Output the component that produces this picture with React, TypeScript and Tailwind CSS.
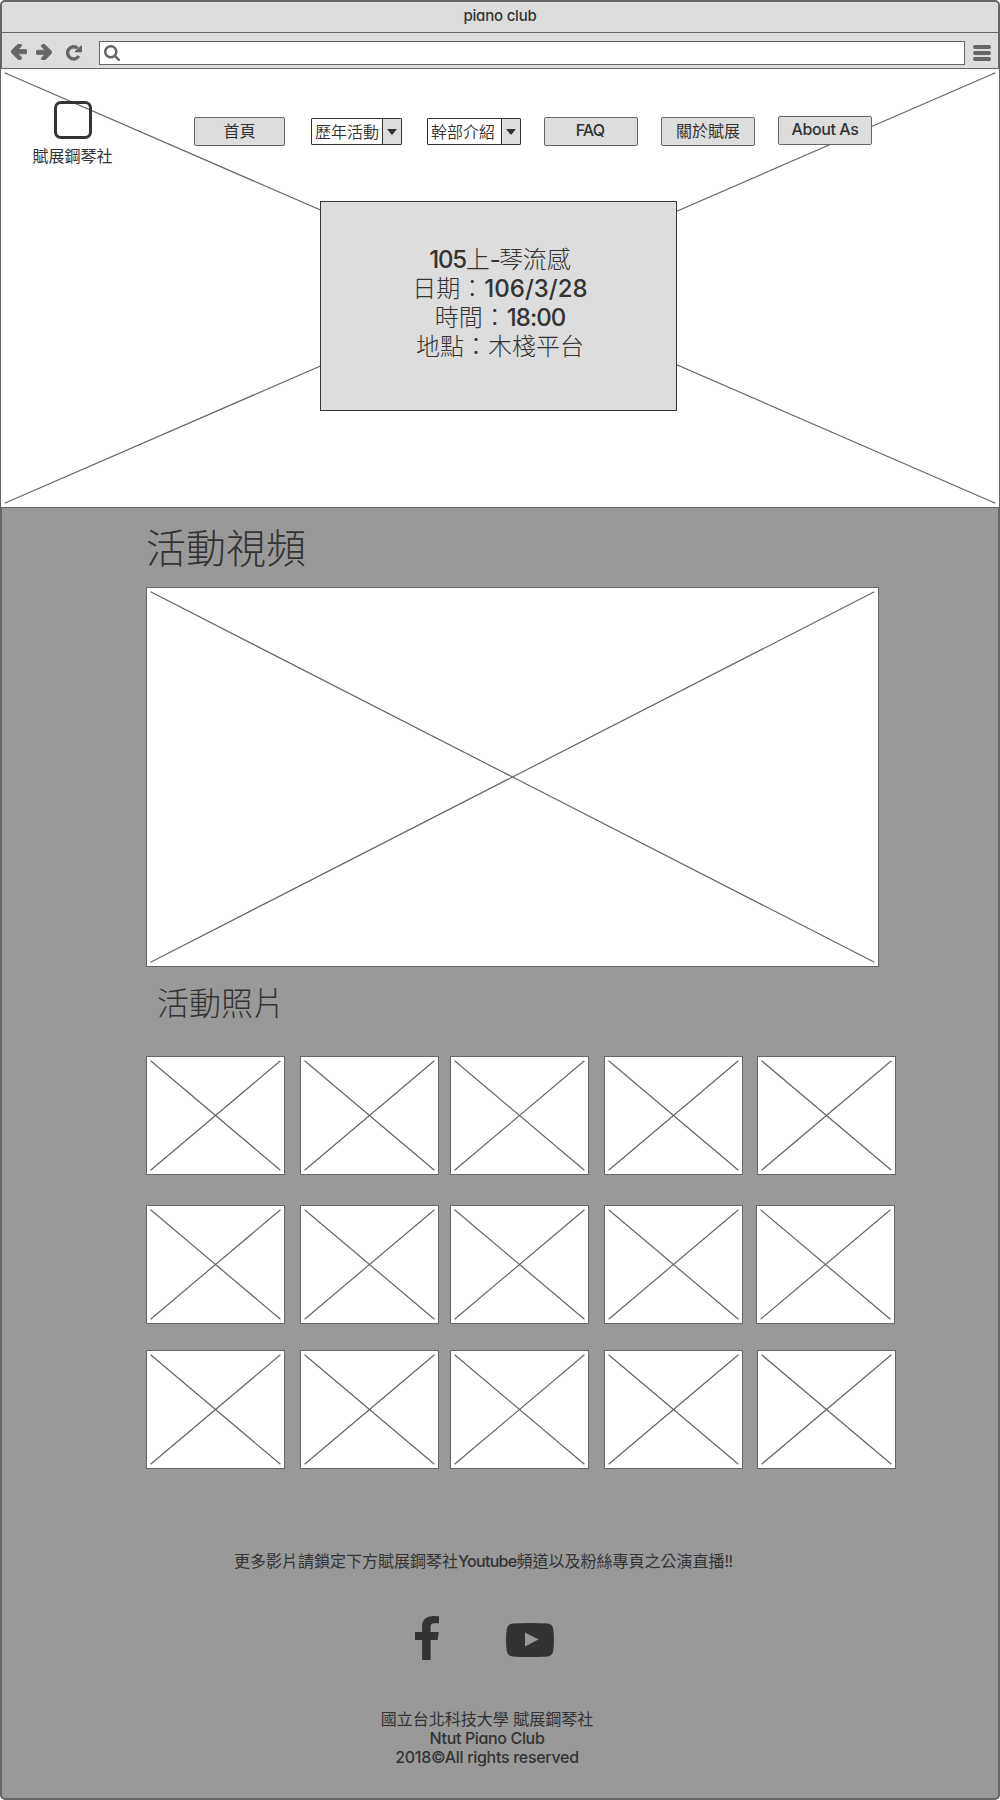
import React from "react";

const LATIN = "font-['Inter','Noto_Sans_CJK_TC',sans-serif] [font-feature-settings:'cv11']";

function Crossed({ width, height, className = "" }: { width: number; height: number; className?: string }) {
  return (
    <div className={`shrink-0 border border-[#666] bg-white ${className}`} style={{ width, height }}>
      <svg className="-m-px block" width={width} height={height} fill="none" stroke="#666" strokeWidth="1.2">
        <path d={`M4.6 4.8L${width - 4.6} ${height - 4.8}M4.6 ${height - 4.8}L${width - 4.6} 4.8`} />
      </svg>
    </div>
  );
}

function ArrowLeft({ className = "" }: { className?: string }) {
  return (
    <svg className={`h-4 w-4 ${className}`} viewBox="64 188 1472 1472" fill="#666" stroke="#666" strokeWidth="70">
      <path d="M1536 832v128q0 53-32.5 90.5t-84.5 37.5h-704l293 294q38 36 38 90t-38 90l-75 76q-37 37-90 37-52 0-91-37l-651-652q-37-37-37-90 0-52 37-91l651-650q38-38 91-38 52 0 90 38l75 74q38 38 38 91t-38 91l-293 293h704q52 0 84.5 37.5t32.5 90.5z" />
    </svg>
  );
}

function Toolbar() {
  return (
    <div className="flex h-[35px] items-start bg-[#ddd] pl-[9px]">
      <ArrowLeft className="mt-[11px]" />
      <ArrowLeft className="mt-[11px] ml-[9px] rotate-180" />
      <svg className="mt-3 ml-[14px] h-4 w-4" viewBox="0 0 16 16" fill="none">
        <path d="M12.9 11A6.1 6.1 0 1 1 11.6 3.2" stroke="#666" strokeWidth="3.4" />
        <path d="M16 .8V6.6Q16 7.2 15.4 7.2H9.4Q8.3 7 9 6.2L15 .5Q15.8 0 16 .8Z" fill="#666" />
      </svg>
      <div className="mt-2 ml-[17px] h-6 w-[866px] border border-[#666] bg-white pt-[3px] pl-1">
        <svg className="h-4 w-4" viewBox="64 128 1664 1664" fill="#666">
          <path d="M1216 832q0-185-131.5-316.5t-316.5-131.5-316.5 131.5-131.5 316.5 131.5 316.5 316.5 131.5 316.5-131.5 131.5-316.5zm512 832q0 52-38 90t-90 38q-54 0-90-38l-343-342q-179 124-399 124-143 0-273.5-55.5t-225-150-150-225-55.5-273.5 55.5-273.5 150-225 225-150 273.5-55.5 273.5 55.5 225 150 150 225 55.5 273.5q0 220-124 399l343 343q37 37 37 90z" />
        </svg>
      </div>
      <div className="mt-3 ml-2 flex w-[18px] flex-col gap-[2px]">
        <div className="h-1 rounded-[2px] bg-[#666]" />
        <div className="h-1 rounded-[2px] bg-[#666]" />
        <div className="h-1 rounded-[2px] bg-[#666]" />
      </div>
    </div>
  );
}

function NavButton({ children, className = "" }: { children: React.ReactNode; className?: string }) {
  return (
    <button className={`flex h-[29px] items-center justify-center rounded-[2px] border border-[#666] bg-[#ddd] text-[16px] leading-none whitespace-nowrap ${className}`}>
      {children}
    </button>
  );
}

function NavSelect({ children, className = "" }: { children: React.ReactNode; className?: string }) {
  return (
    <div className={`flex h-[27px] rounded-[1px] border border-[#333] bg-white ${className}`}>
      <div className="flex flex-1 items-center pl-[3px] text-[16px] leading-none font-[350] whitespace-nowrap">{children}</div>
      <div className="flex w-[19px] shrink-0 items-center justify-center border-l border-[#333] bg-[#ddd]">
        <svg width="10" height="6" viewBox="0 0 10 6" fill="#333">
          <path d="M1 0h8q1 0 .4.8L5.7 5.3q-.7.7-1.4 0L.6.8Q0 0 1 0z" />
        </svg>
      </div>
    </div>
  );
}

function Hero() {
  return (
    <div className="-mx-[2px] -mt-px grid h-[440px] w-[1000px]">
      <Crossed width={1000} height={440} className="[grid-area:1/1]" />
      <div className="[grid-area:1/1]">
        <div className="flex h-[133px] items-start">
          <div className="mt-[33px] ml-8 flex w-[81px] flex-col items-center">
            <div className="h-[38px] w-[38px] rounded-[7px] border-3 border-[#333]" />
            <div className="mt-[9px] text-[16px] leading-4 whitespace-nowrap">賦展鋼琴社</div>
          </div>
          <nav className="mt-12 ml-[81px] flex items-start">
            <NavButton className="mt-px w-[91px] pb-px">首頁</NavButton>
            <NavSelect className="mt-[2px] ml-[26px] w-[91px]">歷年活動</NavSelect>
            <NavSelect className="mt-[2px] ml-[25px] w-[94px]">幹部介紹</NavSelect>
            <NavButton className="mt-px ml-[23px] w-[94px] pr-[2px] pb-[3px] font-medium tracking-[-0.8px]">FAQ</NavButton>
            <NavButton className="mt-px ml-[23px] w-[94px] pb-px">關於賦展</NavButton>
            <NavButton className="ml-[23px] w-[94px] pb-[3px] font-medium tracking-[-0.4px]">About As</NavButton>
          </nav>
        </div>
        <div className="ml-80 h-[210px] w-[357px] border border-[#333] bg-[#ddd] pt-[43px] pl-[3px] text-center text-2xl leading-[29px] whitespace-nowrap">
          <div><span className="font-medium tracking-[-1.2px]">105</span><span className="font-light">上</span><span className="tracking-[-2px]">-</span><span className="font-light">琴流感</span></div>
          <div><span className="font-light">日期：</span><span className="font-medium">106/3/28</span></div>
          <div><span className="font-light">時間：</span><span className="font-medium tracking-[-1px]">18:00</span></div>
          <div className="font-light">地點：木棧平台</div>
        </div>
      </div>
    </div>
  );
}

const rows = [
  { gap: "", last: "ml-[14px]" },
  { gap: "mt-[30px]", last: "ml-[13px]" },
  { gap: "mt-[26px]", last: "ml-[14px]" },
];

function Gallery() {
  return (
    <section>
      {rows.map((row, i) => (
        <div key={i} className={`flex ${row.gap}`}>
          <Crossed width={139} height={119} />
          <Crossed width={139} height={119} className="ml-[15px]" />
          <Crossed width={139} height={119} className="ml-[11px]" />
          <Crossed width={139} height={119} className="ml-[15px]" />
          <Crossed width={139} height={119} className={row.last} />
        </div>
      ))}
    </section>
  );
}

function Footer() {
  return (
    <footer>
      <div className="mt-[82px] ml-[88px] text-[16px] leading-5 whitespace-nowrap">
        更多影片請鎖定下方賦展鋼琴社<span className="font-medium tracking-[-0.7px]">Youtube</span>頻道以及粉絲專頁之公演直播<span className="tracking-[-0.6px]">!!</span>
      </div>
      <div className="mt-[45px] ml-[269px] flex items-start">
        <svg className="h-[44px] w-[24px]" viewBox="479 0 864 1664" preserveAspectRatio="none" fill="#333">
          <path d="M1343 12v264h-157q-86 0-116 36t-30 108v189h293l-39 296h-254v759h-306v-759h-255v-296h255v-218q0-186 104-288.5t277-102.5q147 0 228 12z" />
        </svg>
        <svg className="mt-[7px] ml-[67px]" width="48" height="34" viewBox="0 0 48 34" fill="#333">
          <path fillRule="evenodd" d="M24 0Q35 0 41.5.6Q46.5 1 47.2 6Q48 11 48 17T47.2 28Q46.5 33 41.5 33.4Q35 34 24 34T6.5 33.4Q1.5 33 .8 28Q0 23 0 17T.8 6Q1.5 1 6.5.6Q13 0 24 0ZM19 9.5V23.5L32.5 16.5Z" />
        </svg>
      </div>
      <div className="mt-[50px] ml-[191px] w-[300px] text-center text-[16px] leading-[19px] font-medium whitespace-nowrap">
        <div className="font-normal">國立台北科技大學 賦展鋼琴社</div>
        <div className="tracking-[-0.35px]">Ntut Piano Club</div>
        <div className="tracking-[-0.3px]">2018©All rights reserved</div>
      </div>
    </footer>
  );
}

export default function App() {
  return (
    <div className={`h-[1800px] w-[1000px] rounded-[5px] border-2 border-[#666] bg-[#999] text-[#333] ${LATIN}`}>
      <div className="h-[31px] rounded-t-[3px] border-b border-[#666] bg-[#ddd] text-center text-[15px] leading-[27px] font-medium tracking-[-0.2px]">
        piano club
      </div>
      <Toolbar />
      <div className="h-px" />
      <Hero />
      <main className="pl-36">
        <h1 className="h-[79px] pt-[21px] text-[40px] leading-[40px] font-light">活動視頻</h1>
        <Crossed width={733} height={380} />
        <h2 className="h-[89px] pt-[21px] pl-[11px] text-[32px] leading-[32px] font-light">活動照片</h2>
        <Gallery />
        <Footer />
      </main>
    </div>
  );
}
